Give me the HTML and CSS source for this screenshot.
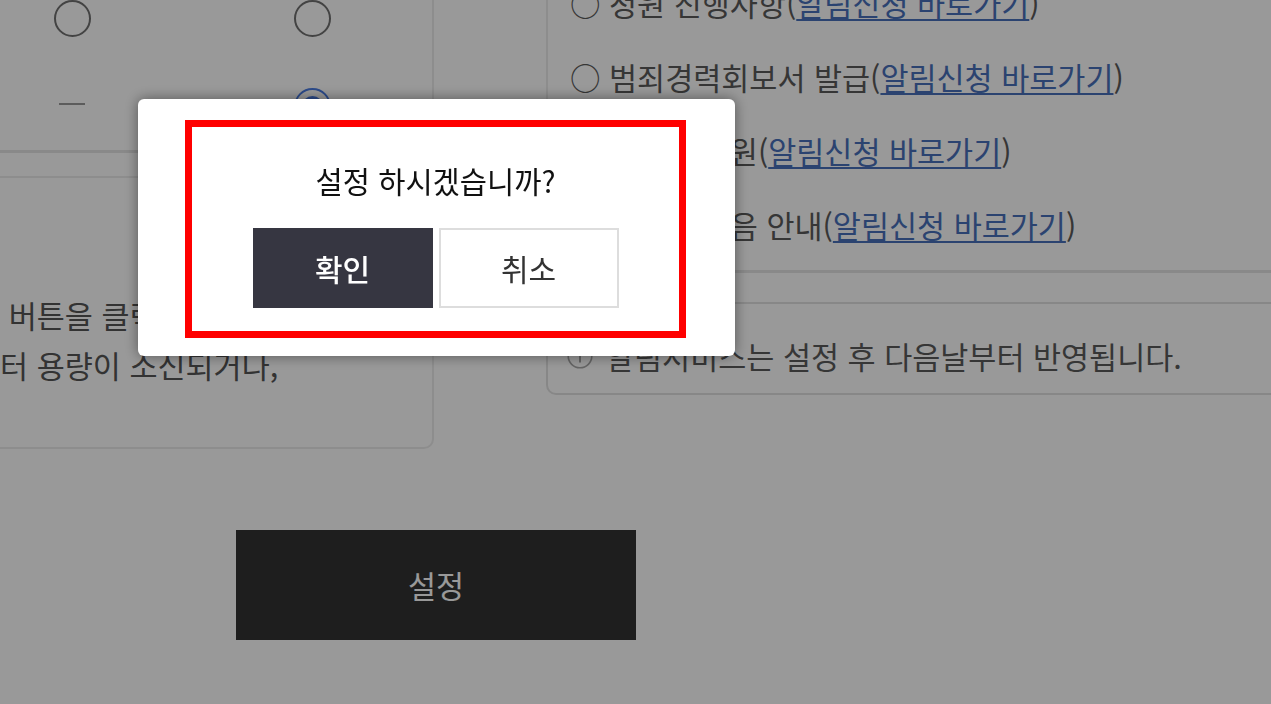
FILE: index.html
```html
<!DOCTYPE html>
<html lang="ko">
<head>
<meta charset="utf-8">
<title>알림 설정</title>
<link rel="stylesheet" href="styles.css">
</head>
<body>
<div class="page">
  <div class="cols">
    <div class="left">
      <div class="opt-table">
        <div class="opt-row">
          <span class="cell label">문자</span>
          <span class="cell"><span class="radio"></span></span>
          <span class="cell"><span class="radio"></span></span>
        </div>
        <div class="opt-row">
          <span class="cell label">카톡</span>
          <span class="cell"><span class="dash"></span></span>
          <span class="cell"><span class="radio checked"></span></span>
        </div>
      </div>
      <div class="info-box">
        <p class="info-text">설정 버튼을 클릭하시면<br>데이터 용량이 소신되거나,</p>
      </div>
    </div>
    <div class="right">
      <ul class="alarm-list">
        <li>○ 청원 진행사항(<a href="#">알림신청 바로가기</a>)</li>
        <li>○ 범죄경력회보서 발급(<a href="#">알림신청 바로가기</a>)</li>
        <li>○ 사이버 민원(<a href="#">알림신청 바로가기</a>)</li>
        <li>○ 출석일 다음 안내(<a href="#">알림신청 바로가기</a>)</li>
      </ul>
      <div class="notice">
        <svg class="notice-icon" width="26" height="26" viewBox="0 0 26 26" aria-hidden="true">
          <circle cx="13" cy="13" r="11.8" fill="none" stroke="#a8a8a8" stroke-width="1.6"/>
          <circle cx="13" cy="7.8" r="1.4" fill="#a8a8a8"/>
          <line x1="13" y1="11" x2="13" y2="19.5" stroke="#a8a8a8" stroke-width="2"/>
        </svg>
        <span>알림서비스는 설정 후 다음날부터 반영됩니다.</span>
      </div>
    </div>
  </div>
  <div class="actions">
    <button class="btn-set" type="button">설정</button>
  </div>
</div>

<div class="dim"></div>
<div class="modal" role="dialog">
  <div class="modal-frame">
    <p class="modal-q">설정 하시겠습니까?</p>
    <div class="modal-btns">
      <button class="btn-ok" type="button">확인</button>
      <button class="btn-cancel" type="button">취소</button>
    </div>
  </div>
</div>
</body>
</html>
```

FILE: styles.css
```css
* { box-sizing: border-box; }

html, body {
  margin: 0;
  padding: 0;
  width: 1271px;
  height: 704px;
  overflow: hidden;
  background: #fff;
  font-family: "Noto Sans CJK KR", "Noto Sans", sans-serif;
  color: #5a5a5a;
}

.page {
  width: 1512px;
  margin-top: -34px;
  margin-left: -166px;
}

.cols {
  display: flex;
  gap: 112px;
  align-items: flex-start;
}

/* ---------- left column ---------- */
.left {
  width: 600px;
  flex-shrink: 0;
}

.opt-table {
  padding-top: 8px;
  border-right: 2px solid #ececec;
  border-bottom: 3px solid #e4e4e4;
}

.opt-row {
  display: flex;
  height: 88px;
}

.cell {
  width: 240px;
  display: flex;
  align-items: center;
  justify-content: center;
}

.cell.label {
  width: 118px;
  font-size: 28px;
}

.radio {
  width: 37px;
  height: 37px;
  border-radius: 50%;
  border: 2px solid #707070;
  background: #fff;
  display: flex;
  align-items: center;
  justify-content: center;
}

.radio.checked {
  border: 2px solid #4a7de6;
}

.radio.checked::after {
  content: "";
  width: 21px;
  height: 21px;
  border-radius: 50%;
  background: #4a7de6;
}

.dash {
  width: 26px;
  height: 2px;
  background: #999;
  margin-top: -5px;
}

.info-box {
  margin-top: 23px;
  height: 273px;
  border: 2px solid #ececec;
  border-radius: 10px;
  padding: 112px 0 0 108px;
}

.info-text {
  margin: 0;
  font-size: 30.5px;
  line-height: 50px;
  white-space: nowrap;
  color: #555;
}

/* ---------- right column ---------- */
.right {
  width: 800px;
  flex-shrink: 0;
}

.alarm-list {
  list-style: none;
  margin: 0;
  padding: 0 0 8px 22px;
  border-left: 2px solid #ececec;
  border-bottom: 3px solid #e4e4e4;
}

.alarm-list li {
  height: 74px;
  line-height: 74px;
  font-size: 30.5px;
  white-space: nowrap;
}

.alarm-list a {
  color: #4971bb;
  text-decoration: underline;
  text-decoration-thickness: 2px;
  text-underline-offset: 3px;
}

.notice {
  margin-top: 29px;
  height: 93px;
  border: 2px solid #e2e2e2;
  border-radius: 10px;
  padding: 32px 0 0 19px;
  display: flex;
  align-items: flex-start;
  gap: 13px;
  font-size: 30.5px;
  line-height: 40px;
  white-space: nowrap;
}

.notice-icon {
  margin-top: 7px;
  flex-shrink: 0;
}

/* ---------- bottom action ---------- */
.actions {
  margin-top: 81px;
  padding-left: 402px;
}

.btn-set {
  width: 400px;
  height: 110px;
  border: 0;
  background: #323232;
  color: #fff;
  font-family: inherit;
  font-size: 30.5px;
  padding: 0;
}

/* ---------- dim + modal ---------- */
.dim {
  position: fixed;
  inset: 0;
  background: rgba(0, 0, 0, 0.4);
}

.modal {
  position: fixed;
  left: 138px;
  top: 99px;
  width: 597px;
  height: 257px;
  background: #fff;
  border-radius: 6px;
  box-shadow: 0 0 14px rgba(0, 0, 0, 0.45);
  padding: 21px 49px 18px 47px;
}

.modal-frame {
  height: 218px;
  border: 7px solid #ff0000;
  display: flex;
  flex-direction: column;
  align-items: center;
}

.modal-q {
  margin: 34px 0 0;
  font-size: 29.6px;
  line-height: 40px;
  color: #111;
}

.modal-btns {
  margin-top: 27px;
  display: flex;
  gap: 6px;
}

.modal-btns button {
  width: 180px;
  height: 80px;
  font-family: inherit;
  font-size: 30px;
  padding: 0;
}

.btn-ok {
  background: #363641;
  color: #fff;
  border: 0;
  font-weight: 500;
}

.btn-cancel {
  background: #fff;
  color: #333;
  border: 2px solid #dddddd;
}
```
